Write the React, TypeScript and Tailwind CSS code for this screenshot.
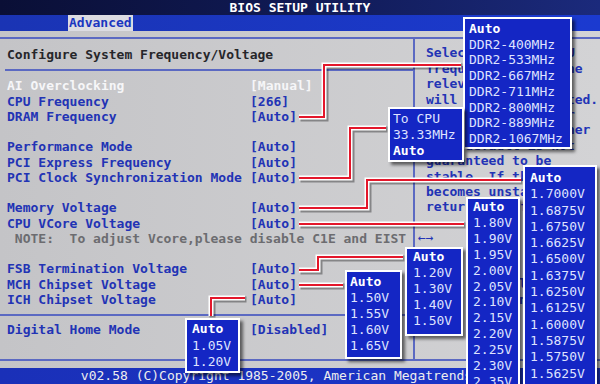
import React from 'react';

type Row = { label: string; value?: string; tone?: 'white' | 'note' } | null;

const rows: Row[] = [
  { label: 'AI Overclocking', value: '[Manual]', tone: 'white' },
  { label: 'CPU Frequency', value: '[266]' },
  { label: 'DRAM Frequency', value: '[Auto]' },
  null,
  { label: 'Performance Mode', value: '[Auto]' },
  { label: 'PCI Express Frequency', value: '[Auto]' },
  { label: 'PCI Clock Synchronization Mode', value: '[Auto]' },
  null,
  { label: 'Memory Voltage', value: '[Auto]' },
  { label: 'CPU VCore Voltage', value: '[Auto]' },
  { label: ' NOTE:  To adjust Vcore,please disable C1E and EIST', tone: 'note' },
  null,
  { label: 'FSB Termination Voltage', value: '[Auto]' },
  { label: 'MCH Chipset Voltage', value: '[Auto]' },
  { label: 'ICH Chipset Voltage', value: '[Auto]' },
];

const help = [
  'Select the DRAM/CPU',
  'frequency ratio. The',
  'relevant frequency',
  'will be auto-adjusted.',
  'Setting a value for',
  'DRAM frequency higher',
  'than default is not',
  'guaranteed to be',
  'stable. If the system',
  'becomes unstable,',
  'return to default.',
];

const keys = [
  ['←→', 'Select Screen'],
  ['↑↓', 'Select Item'],
  ['+-', 'Change Option'],
  ['F1', 'General Help'],
  ['F10', 'Save and Exit'],
  ['ESC', 'Exit'],
];

// connector lines from the option values to their popup lists
const wires = [
  '299,117 324,117 324,65 461,65',
  '299,178 350,178 350,128 386,128',
  '299,208 367,208 367,180 521,180',
  '299,224 464,224',
  '299,270 318,270 318,257 403,257',
  '299,285 343,285',
  '245,298 211,298 211,316',
];

function Popup({ className, items }: { className: string; items: string[] }) {
  return (
    <div
      className={`absolute border-2 border-white bg-[#1426c4] text-[13px] text-[#dfe2ff] shadow-[3px_3px_3px_rgba(0,0,0,0.55)] ${className}`}
    >
      {items.map((it, i) => (
        <div key={i} className={i === 0 ? 'font-bold text-white' : ''}>
          {it}
        </div>
      ))}
    </div>
  );
}

export default function App() {
  return (
    <div className="relative w-[600px] h-[384px] overflow-hidden bg-gradient-to-r from-[#c4c4c7] to-[#d3d3d5] font-['DejaVu_Sans_Mono','Liberation_Mono',monospace] text-[13px]">
      {/* Title */}
      <div className="h-[15px] bg-gradient-to-r from-[#0a0f36] via-[#101a55] to-[#1b2a7c] flex items-center justify-center text-white font-bold leading-[15px]">
        BIOS SETUP UTILITY
      </div>

      {/* Tabs */}
      <div className="h-[16px] bg-gradient-to-r from-[#1a34b4] to-[#1b3ad0] pl-[68px] flex">
        <div className="px-[1px] bg-[#dcdce2] text-[#1a36c0] font-bold leading-[16px]">Advanced</div>
      </div>
      <div className="h-[6px]" />

      {/* Main */}
      <div className="h-[324px] border-y-2 border-[#5b69c2] flex">
        <div className="w-[415px] border-r-2 border-[#5b69c2] flex flex-col font-bold text-[#2233b5]">
          <div className="mt-[7.5px] pl-[7px] leading-[15px] text-[#26262a]">Configure System Frequency/Voltage</div>
          <div className="mt-[7.5px] ml-[5px] h-[2px] bg-[#5b69c2]" />
          <div className="mt-[7.4px] pl-[7px] flex flex-col">
            {rows.map((r, i) =>
              r ? (
                <div
                  key={i}
                  className={`h-[15.25px] leading-[15.25px] grid grid-cols-[243px_1fr] whitespace-pre ${
                    r.tone === 'white' ? 'text-[#f6f6f8]' : r.tone === 'note' ? 'text-[#6c6c70]' : ''
                  }`}
                >
                  <span className={r.tone === 'note' ? 'col-span-2' : ''}>{r.label}</span>
                  {r.value && <span>{r.value}</span>}
                </div>
              ) : (
                <div key={i} className="h-[15.25px]" />
              ),
            )}
          </div>
          <div className="mt-[6.85px] h-[2px] bg-[#5b69c2]" />
          <div className="mt-[6.4px] pl-[7px] h-[15.25px] leading-[15.25px] grid grid-cols-[243px_1fr]">
            <span>Digital Home Mode</span>
            <span>[Disabled]</span>
          </div>
        </div>

        <div className="flex-1 pt-[6.4px] font-bold text-[#2233b5] leading-[15.4px] whitespace-pre">
          {help.map((h, i) => (
            <div key={i} className="pl-[11px]">
              {h}
            </div>
          ))}
          <div className="h-[15.4px]" />
          {keys.map(([k, d]) => (
            <div key={k} className="pl-[3px] flex">
              <span className="w-[54px] font-normal">{k}</span>
              <span>{d}</span>
            </div>
          ))}
        </div>
      </div>
      <div className="h-[7px]" />

      {/* Footer */}
      <div className="h-[16px] bg-gradient-to-r from-[#1a30b8] to-[#1c36cc] flex items-center justify-center text-[#eeeeee] leading-[16px]">
        v02.58 (C)Copyright 1985-2005, American Megatrends, Inc.
      </div>

      {/* Callout wires */}
      <svg className="absolute left-0 top-0 pointer-events-none" width="600" height="384" viewBox="0 0 600 384">
        {wires.map((p, i) => (
          <g key={i} fill="none" strokeLinejoin="miter">
            <polyline points={p} stroke="rgba(0,0,0,0.35)" strokeWidth="6" transform="translate(1.5 1.5)" />
            <polyline points={p} stroke="#ffffff" strokeWidth="5" />
            <polyline points={p} stroke="#e3172b" strokeWidth="2" />
          </g>
        ))}
      </svg>

      {/* Option lists */}
      <Popup
        className="left-[463px] top-[17px] w-[109px] pt-[2px] pl-[4px] leading-[15.7px]"
        items={['Auto', 'DDR2-400MHz', 'DDR2-533MHz', 'DDR2-667MHz', 'DDR2-711MHz', 'DDR2-800MHz', 'DDR2-889MHz', 'DDR2-1067MHz']}
      />
      <Popup
        className="left-[388px] top-[107px] w-[76px] pt-[2px] pb-[1px] pl-[3px] leading-[16px] [&>div:first-child]:font-normal [&>div:first-child]:text-[#dfe2ff] [&>div:last-child]:font-bold [&>div:last-child]:text-white"
        items={['To CPU', '33.33MHz', 'Auto']}
      />
      <Popup
        className="left-[185px] top-[318px] w-[55px] pt-[1px] pl-[5px] leading-[16.5px]"
        items={['Auto', '1.05V', '1.20V']}
      />
      <Popup
        className="left-[345px] top-[270px] w-[57px] pt-[2px] pb-[3px] pl-[3px] leading-[16px]"
        items={['Auto', '1.50V', '1.55V', '1.60V', '1.65V']}
      />
      <Popup
        className="left-[405px] top-[247px] w-[58px] pb-[5px] pl-[6px] leading-[16px]"
        items={['Auto', '1.20V', '1.30V', '1.40V', '1.50V']}
      />
      <Popup
        className="left-[466px] top-[197px] w-[54px] pl-[5px] leading-[15.9px]"
        items={['Auto', '1.80V', '1.90V', '1.95V', '2.00V', '2.05V', '2.10V', '2.15V', '2.20V', '2.25V', '2.30V', '2.35V', '2.40V']}
      />
      <Popup
        className="left-[523px] top-[165px] w-[74px] pt-[3px] pl-[5px] leading-[16.3px]"
        items={['Auto', '1.7000V', '1.6875V', '1.6750V', '1.6625V', '1.6500V', '1.6375V', '1.6250V', '1.6125V', '1.6000V', '1.5875V', '1.5750V', '1.5625V', '1.5500V']}
      />
    </div>
  );
}
